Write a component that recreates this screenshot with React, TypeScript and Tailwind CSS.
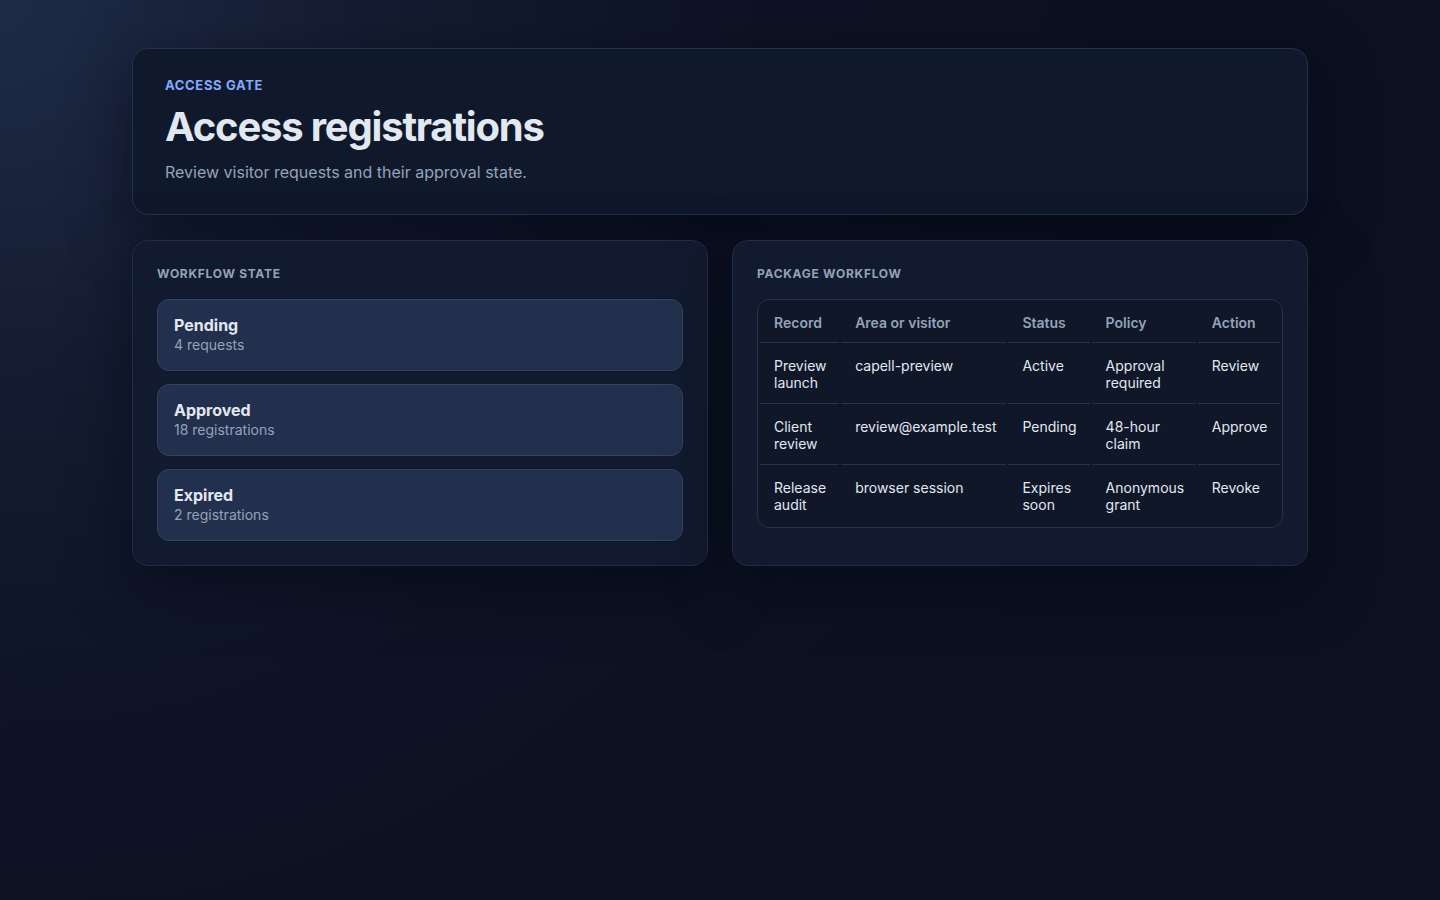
import React from "react";

const states = [
  { title: "Pending", sub: "4 requests" },
  { title: "Approved", sub: "18 registrations" },
  { title: "Expired", sub: "2 registrations" },
];

const rows = [
  ["Preview launch", "capell-preview", "Active", "Approval required", "Review"],
  ["Client review", "review@example.test", "Pending", "48-hour claim", "Approve"],
  ["Release audit", "browser session", "Expires soon", "Anonymous grant", "Revoke"],
];

const headers = ["Record", "Area or visitor", "Status", "Policy", "Action"];
const widths = ["w-[79px]", "w-[165px]", "w-[81px]", "w-[104px]", "w-[82px]"];

export default function App() {
  return (
    <div
      className="min-h-[900px] w-full bg-[#0b1120] bg-[radial-gradient(circle_at_0%_0%,#1f2b47_0%,#141c31_22%,#0d1324_45%,#0b1120_70%)] px-[132px] pt-12 pb-12 font-['Inter','Noto_Sans',sans-serif] text-[#e2e8f0]"
    >
      <div className="rounded-2xl border border-[#26314a] bg-[#10192c] px-8 pt-7 pb-[30px] shadow-[0_20px_60px_rgba(2,6,18,0.55)]">
        <div className="text-[13px] leading-4 font-bold uppercase tracking-[0.05em] text-[#84a9ff]">
          Access gate
        </div>
        <h1 className="mt-[11px] text-[40px] leading-[46px] font-bold tracking-[-0.03em] text-[#e2e8f0]">
          Access registrations
        </h1>
        <p className="mt-[10px] text-base leading-6 text-[#94a3b8]">
          Review visitor requests and their approval state.
        </p>
      </div>

      <div className="mt-[25px] grid grid-cols-2 gap-6">
        <section className="rounded-2xl border border-[#222c44] bg-[#111a2e] px-6 pt-6 pb-6 shadow-[0_20px_60px_rgba(2,6,18,0.5)]">
          <h2 className="text-xs leading-[18px] font-bold uppercase tracking-[0.06em] text-[#94a3b8]">
            Workflow state
          </h2>
          <div className="mt-[16px] flex flex-col gap-[13px]">
            {states.map((s) => (
              <div
                key={s.title}
                className="h-[72px] rounded-xl border border-[#33425f] bg-[#22304d] px-4 pt-[15px]"
              >
                <div className="text-base leading-5 font-bold text-[#e2e8f0]">{s.title}</div>
                <div className="text-sm leading-5 text-[#94a3b8]">{s.sub}</div>
              </div>
            ))}
          </div>
        </section>

        <section className="rounded-2xl border border-[#222c44] bg-[#111a2e] px-6 pt-6 pb-6 shadow-[0_20px_60px_rgba(2,6,18,0.5)]">
          <h2 className="text-xs leading-[18px] font-bold uppercase tracking-[0.06em] text-[#94a3b8]">
            Package workflow
          </h2>
          <div className="mt-[16px] overflow-hidden rounded-xl border border-[#26314a] bg-[#0f1729]">
            <table className="w-full table-fixed border-separate border-spacing-0.5 text-left text-sm">
              <colgroup>
                {widths.map((w, i) => (
                  <col key={i} className={w} />
                ))}
              </colgroup>
              <thead>
                <tr>
                  {headers.map((h) => (
                    <th
                      key={h}
                      className="border-b border-[#26314a] px-3.5 pt-3 pb-[11px] text-sm leading-[17px] font-semibold text-[#94a3b8]"
                    >
                      {h}
                    </th>
                  ))}
                </tr>
              </thead>
              <tbody>
                {rows.map((r, ri) => (
                  <tr key={ri}>
                    {r.map((c, ci) => (
                      <td
                        key={ci}
                        className={`px-3.5 py-3 align-top text-sm leading-[17px] text-[#e2e8f0] ${
                          ri < rows.length - 1 ? "border-b border-[#26314a]" : ""
                        }`}
                      >
                        {c}
                      </td>
                    ))}
                  </tr>
                ))}
              </tbody>
            </table>
          </div>
        </section>
      </div>
    </div>
  );
}
